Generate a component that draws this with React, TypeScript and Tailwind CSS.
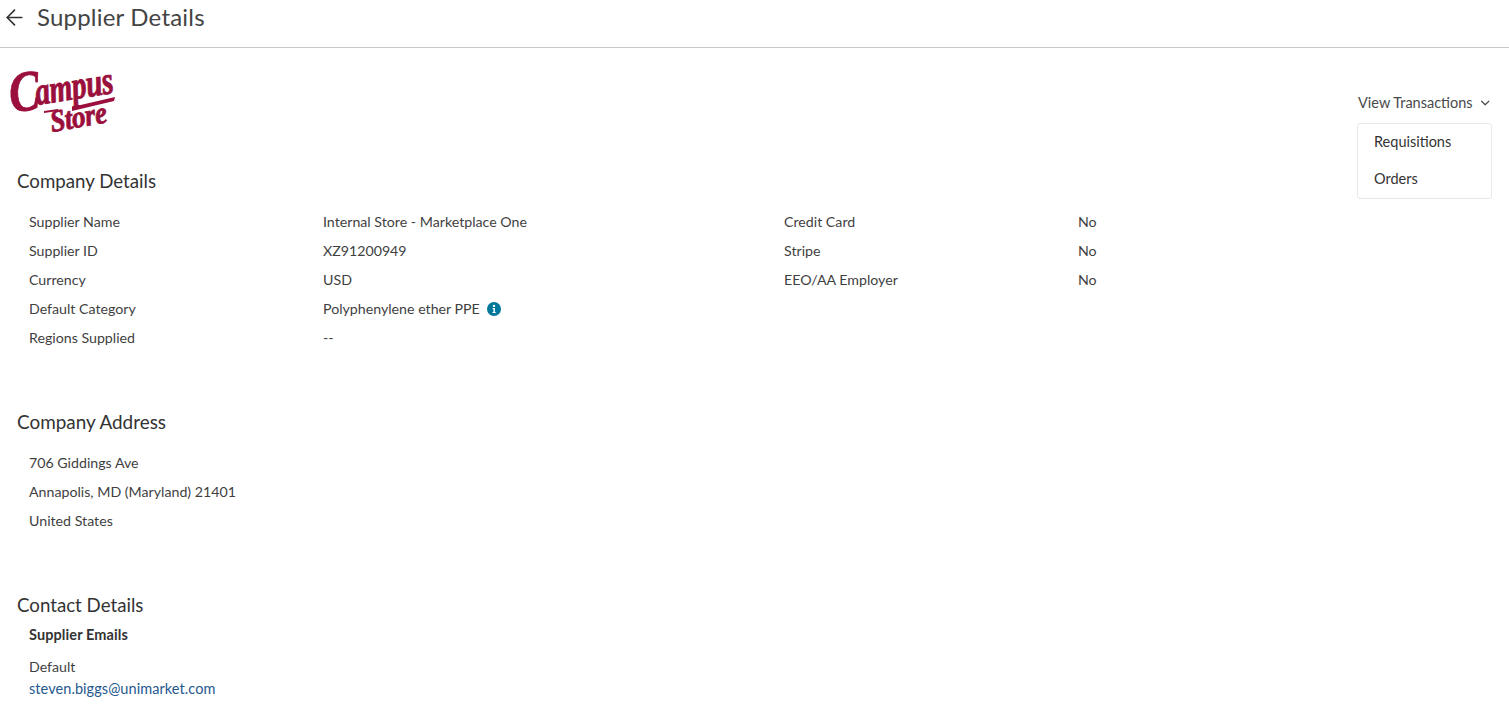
import { ArrowLeft, ChevronDown } from 'lucide-react';

const detailsLeft = [
  { label: 'Supplier Name', value: 'Internal Store - Marketplace One' },
  { label: 'Supplier ID', value: 'XZ91200949' },
  { label: 'Currency', value: 'USD' },
  { label: 'Default Category', value: 'Polyphenylene ether PPE', info: true },
  { label: 'Regions Supplied', value: '--' },
];

const detailsRight = [
  { label: 'Credit Card', value: 'No' },
  { label: 'Stripe', value: 'No' },
  { label: 'EEO/AA Employer', value: 'No' },
];

const addressLines = ['706 Giddings Ave', 'Annapolis, MD (Maryland) 21401', 'United States'];

function CampusLogo() {
  return (
    <svg width="120" height="76" viewBox="0 0 120 76" fill="#9a0f3c" className="overflow-visible">
      <g fontFamily="'Liberation Serif', serif" fontStyle="italic" fontWeight="700" stroke="#9a0f3c" strokeWidth="0.7">
        <text transform="translate(3 50) rotate(-6) scale(0.95 1.2)" fontSize="48">C</text>
        <text transform="translate(29 43) rotate(-9) scale(0.98 1.3)" fontSize="30" letterSpacing="-0.3">ampus</text>
        <text transform="translate(44 70) rotate(-10) scale(1 1.15)" fontSize="27" letterSpacing="-0.3">Store</text>
      </g>
      <path d="M36 49 L50 47 L50 49 L36 51 Z" />
      <path d="M64 45 L107 35 L106 39 L64 49 Z" />
    </svg>
  );
}

function InfoDot() {
  return (
    <svg width="14" height="14" viewBox="0 0 14 14" className="ml-[7px] mt-[1px]">
      <circle cx="7" cy="7" r="7" fill="#00779b" />
      <circle cx="7" cy="3.9" r="1.2" fill="#fff" />
      <path d="M5.6 6h2.3v3.9h.8v1H5.5v-1h.9V7h-.8z" fill="#fff" />
    </svg>
  );
}

function DetailRows({ rows }: { rows: { label: string; value: string; info?: boolean }[] }) {
  return (
    <div className="flex flex-col">
      {rows.map((row) => (
        <div key={row.label} className="flex h-[29px] items-center">
          <span className="w-[294px]">{row.label}</span>
          <span className="flex items-center">
            {row.value}
            {row.info && <InfoDot />}
          </span>
        </div>
      ))}
    </div>
  );
}

export default function App() {
  return (
    <div className="relative min-h-[717px] overflow-hidden bg-white font-['Lato','Liberation_Sans',sans-serif] text-[14.2px] text-[#3f3f3f]">
      <header className="flex h-[48px] items-start border-b border-[#c8c8c8] pl-[2px] pt-[2px]">
        <ArrowLeft className="mt-[3px] h-[25px] w-[25px] text-[#333]" strokeWidth={1.6} />
        <h1 className="ml-[10px] text-[24px] leading-[30px] font-normal tracking-[0.2px] text-[#444]">Supplier Details</h1>
      </header>

      <div className="pl-[8px] pt-[14px]">
        <CampusLogo />
      </div>

      <main className="pl-[17px]">
        <h2 className="mt-[31px] text-[18.7px] leading-[24px] text-[#333]">Company Details</h2>
        <div className="mt-[14px] flex pl-[12px]">
          <div className="w-[755px]">
            <DetailRows rows={detailsLeft} />
          </div>
          <DetailRows rows={detailsRight} />
        </div>

        <h2 className="mt-[58px] text-[18.9px] leading-[24px] text-[#333]">Company Address</h2>
        <div className="mt-[14px] flex flex-col pl-[12px]">
          {addressLines.map((line) => (
            <div key={line} className="flex h-[29px] items-center">{line}</div>
          ))}
        </div>

        <h2 className="mt-[58px] text-[18.7px] leading-[24px] text-[#333]">Contact Details</h2>
        <div className="pl-[12px]">
          <div className="mt-[8px] h-[20px] text-[14.5px] leading-[20px] font-bold tracking-[0.1px] text-[#333]">Supplier Emails</div>
          <div className="mt-[12px] leading-[20px]">Default</div>
          <a href="#" className="mt-[1px] block text-[14.5px] leading-[22px] tracking-[0.07px] text-[#25588e]">steven.biggs@unimarket.com</a>
        </div>
      </main>

      <div className="absolute left-[1357px] top-[93px] w-[135px] text-[14.5px]">
        <button className="flex h-[20px] w-full items-center whitespace-nowrap pl-[1px] text-[#4a4a4a]">
          View Transactions
          <ChevronDown className="ml-[5px] h-[18px] w-[18px]" strokeWidth={2} />
        </button>
        <div className="mt-[10px] flex h-[76px] flex-col rounded-[3px] border border-[#e8e8e8] bg-white pl-[16px] text-[#333]">
          <span className="mt-[8px] leading-[20px]">Requisitions</span>
          <span className="mt-[17px] leading-[20px]">Orders</span>
        </div>
      </div>
    </div>
  );
}
